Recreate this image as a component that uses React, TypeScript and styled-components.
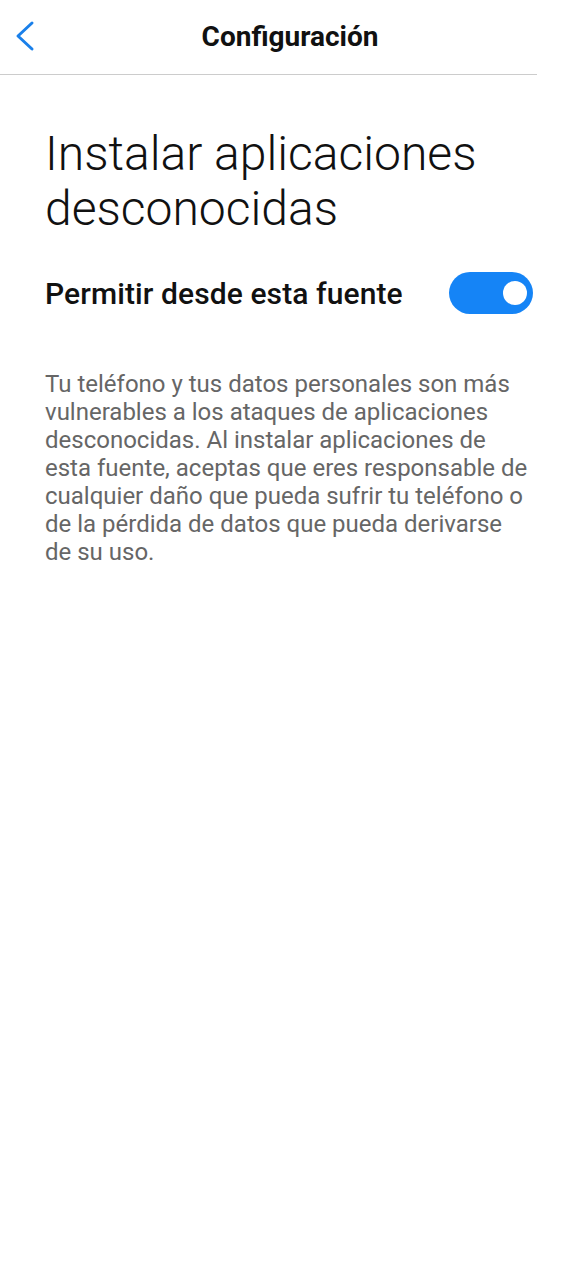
import React, { useState } from "react";
import styled, { createGlobalStyle } from "styled-components";

const Global = createGlobalStyle`
  html, body { margin: 0; padding: 0; background: #fff; }
  body { font-family: Roboto, "Noto Sans", sans-serif; -webkit-font-smoothing: antialiased; }
  * { box-sizing: border-box; }
`;

const Page = styled.div`
  width: 580px;
  min-height: 1280px;
  background: #fff;
  display: flex;
  flex-direction: column;
`;

const Header = styled.header`
  position: relative;
  height: 75px;
  width: 537px;
  display: flex;
  align-items: center;
  justify-content: center;
  border-bottom: 1px solid #cccccc;
  padding-left: 43px;
`;

const BackButton = styled.button`
  position: absolute;
  left: 8px;
  top: 17px;
  width: 34px;
  height: 40px;
  border: none;
  background: none;
  padding: 0;
  display: flex;
  align-items: center;
  justify-content: center;
  cursor: pointer;
`;

const HeaderTitle = styled.h1`
  margin: 0;
  font-size: 28px;
  font-weight: 700;
  color: #111;
  line-height: 1;
`;

const Content = styled.main`
  padding: 51px 47px 0 45px;
  display: flex;
  flex-direction: column;
`;

const BigTitle = styled.h2`
  margin: 0;
  font-size: 48px;
  font-weight: 300;
  line-height: 55px;
  color: #111;
`;

const Row = styled.div`
  margin-top: 36px;
  display: flex;
  align-items: center;
  justify-content: space-between;
`;

const RowLabel = styled.span`
  font-size: 30px;
  font-weight: 500;
  color: #111;
  letter-spacing: 0.1px;
`;

const Switch = styled.button<{ $on: boolean }>`
  position: relative;
  width: 84px;
  height: 42px;
  border-radius: 21px;
  border: none;
  padding: 0;
  background: ${(p) => (p.$on ? "#1584f6" : "#c8c8c8")};
  cursor: pointer;
`;

const Knob = styled.span<{ $on: boolean }>`
  position: absolute;
  top: 9px;
  left: ${(p) => (p.$on ? "54px" : "6px")};
  width: 24px;
  height: 24px;
  border-radius: 50%;
  background: #fff;
`;

const Description = styled.p`
  margin: 56px 0 0;
  font-size: 24px;
  line-height: 28px;
  color: #666;
  font-weight: 400;
`;

export default function App() {
  const [on, setOn] = useState(true);
  return (
    <>
      <Global />
      <Page>
        <Header>
          <BackButton aria-label="Atrás">
            <svg width="34" height="40" viewBox="0 0 34 40">
              <path
                d="M24 6 L10 19 L24 32"
                fill="none"
                stroke="#1a80ea"
                strokeWidth="3"
                strokeLinecap="round"
                strokeLinejoin="round"
              />
            </svg>
          </BackButton>
          <HeaderTitle>Configuración</HeaderTitle>
        </Header>
        <Content>
          <BigTitle>
            Instalar aplicaciones
            <br />
            desconocidas
          </BigTitle>
          <Row>
            <RowLabel>Permitir desde esta fuente</RowLabel>
            <Switch $on={on} onClick={() => setOn(!on)} aria-label="Permitir desde esta fuente">
              <Knob $on={on} />
            </Switch>
          </Row>
          <Description>
            Tu teléfono y tus datos personales son más vulnerables a los ataques de aplicaciones
            desconocidas. Al instalar aplicaciones de esta fuente, aceptas que eres responsable de
            cualquier daño que pueda sufrir tu teléfono o de la pérdida de datos que pueda derivarse
            de su uso.
          </Description>
        </Content>
      </Page>
    </>
  );
}
